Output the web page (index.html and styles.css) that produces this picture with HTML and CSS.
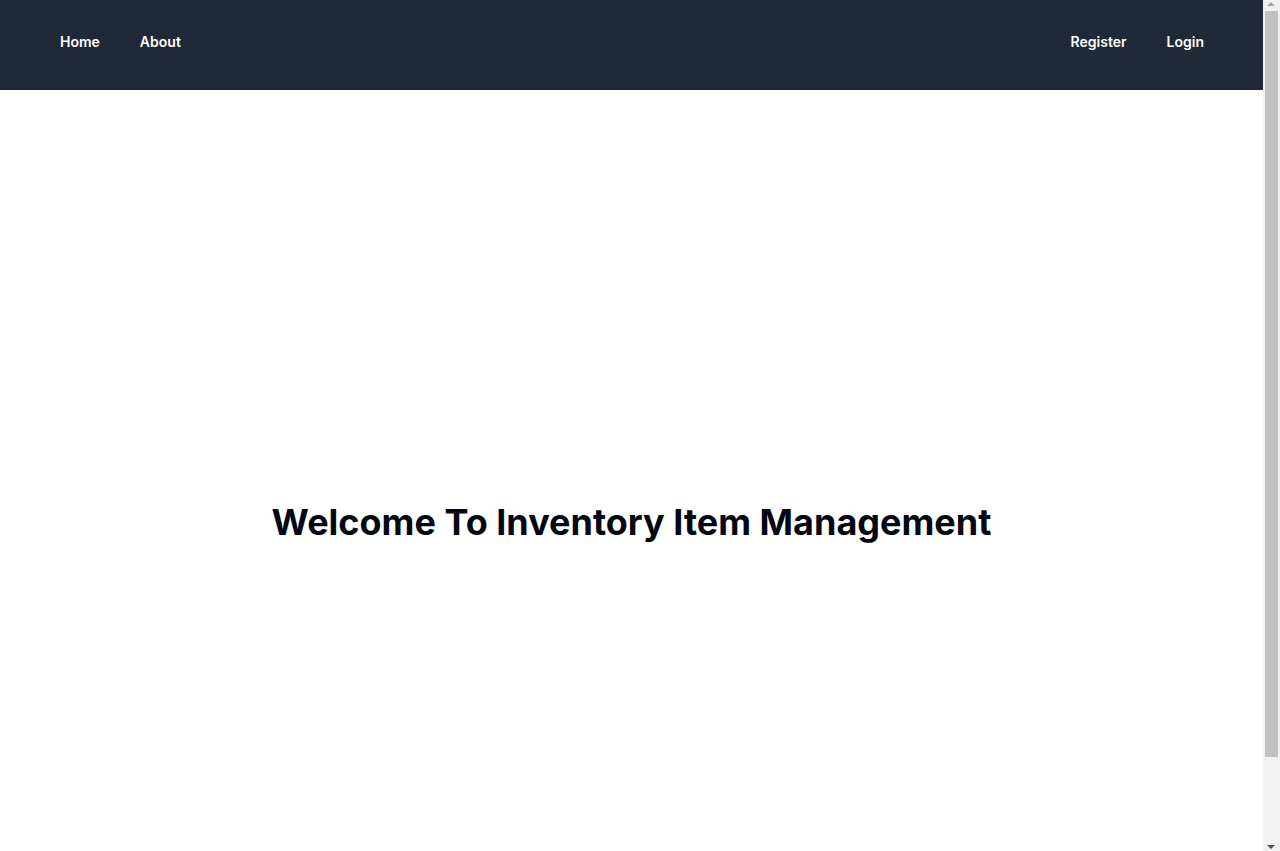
FILE: index.html
```html
<!DOCTYPE html>
<html lang="en">
<head>
<meta charset="utf-8">
<title>Inventory Item Management</title>
<link rel="stylesheet" href="styles.css">
</head>
<body>
<div class="page">
  <nav class="navbar">
    <div class="nav-group">
      <a class="nav-link" href="#">Home</a>
      <a class="nav-link" href="#">About</a>
    </div>
    <div class="nav-group">
      <a class="nav-link" href="#">Register</a>
      <a class="nav-link" href="#">Login</a>
    </div>
  </nav>
  <main class="hero">
    <h1 class="hero-title">Welcome To Inventory Item Management</h1>
  </main>
</div>
<div class="fake-scrollbar" aria-hidden="true">
  <span class="sb-arrow sb-up"></span>
  <span class="sb-thumb"></span>
  <span class="sb-arrow sb-down"></span>
</div>
</body>
</html>
```
FILE: styles.css
```css
* { box-sizing: border-box; }
html, body { margin: 0; padding: 0; }
body {
  font-family: Inter, "Noto Sans", sans-serif;
  background: #ffffff;
  color: #030712;
}
.page {
  width: calc(100% - 17px);
}
.navbar {
  height: 90px;
  background: #1f2937;
  display: flex;
  justify-content: space-between;
  align-items: flex-start;
  padding: 25px 39px 0 40px;
}
.nav-group { display: flex; }
.nav-link {
  color: #ffffff;
  text-decoration: none;
  font-size: 14px;
  font-weight: 600;
  line-height: 20px;
  padding: 7px 20px;
}
.hero {
  min-height: 100vh;
  display: flex;
  align-items: center;
  justify-content: center;
  padding-top: 12px;
}
.hero-title {
  margin: 0;
  font-size: 36px;
  line-height: 40px;
  font-weight: 700;
  color: #030712;
}
.fake-scrollbar {
  position: fixed;
  top: 0;
  right: 0;
  width: 17px;
  height: 100vh;
  background: #f1f1f1;
}
.sb-thumb {
  position: absolute;
  left: 2px;
  right: 2px;
  top: 11px;
  height: 746px;
  background: #c1c1c1;
}
.sb-arrow {
  position: absolute;
  left: 4px;
  width: 0;
  height: 0;
  border-left: 4px solid transparent;
  border-right: 4px solid transparent;
}
.sb-up {
  top: 2px;
  border-bottom: 4px solid #a3a3a3;
}
.sb-down {
  bottom: 2px;
  border-top: 4px solid #505050;
}
```
